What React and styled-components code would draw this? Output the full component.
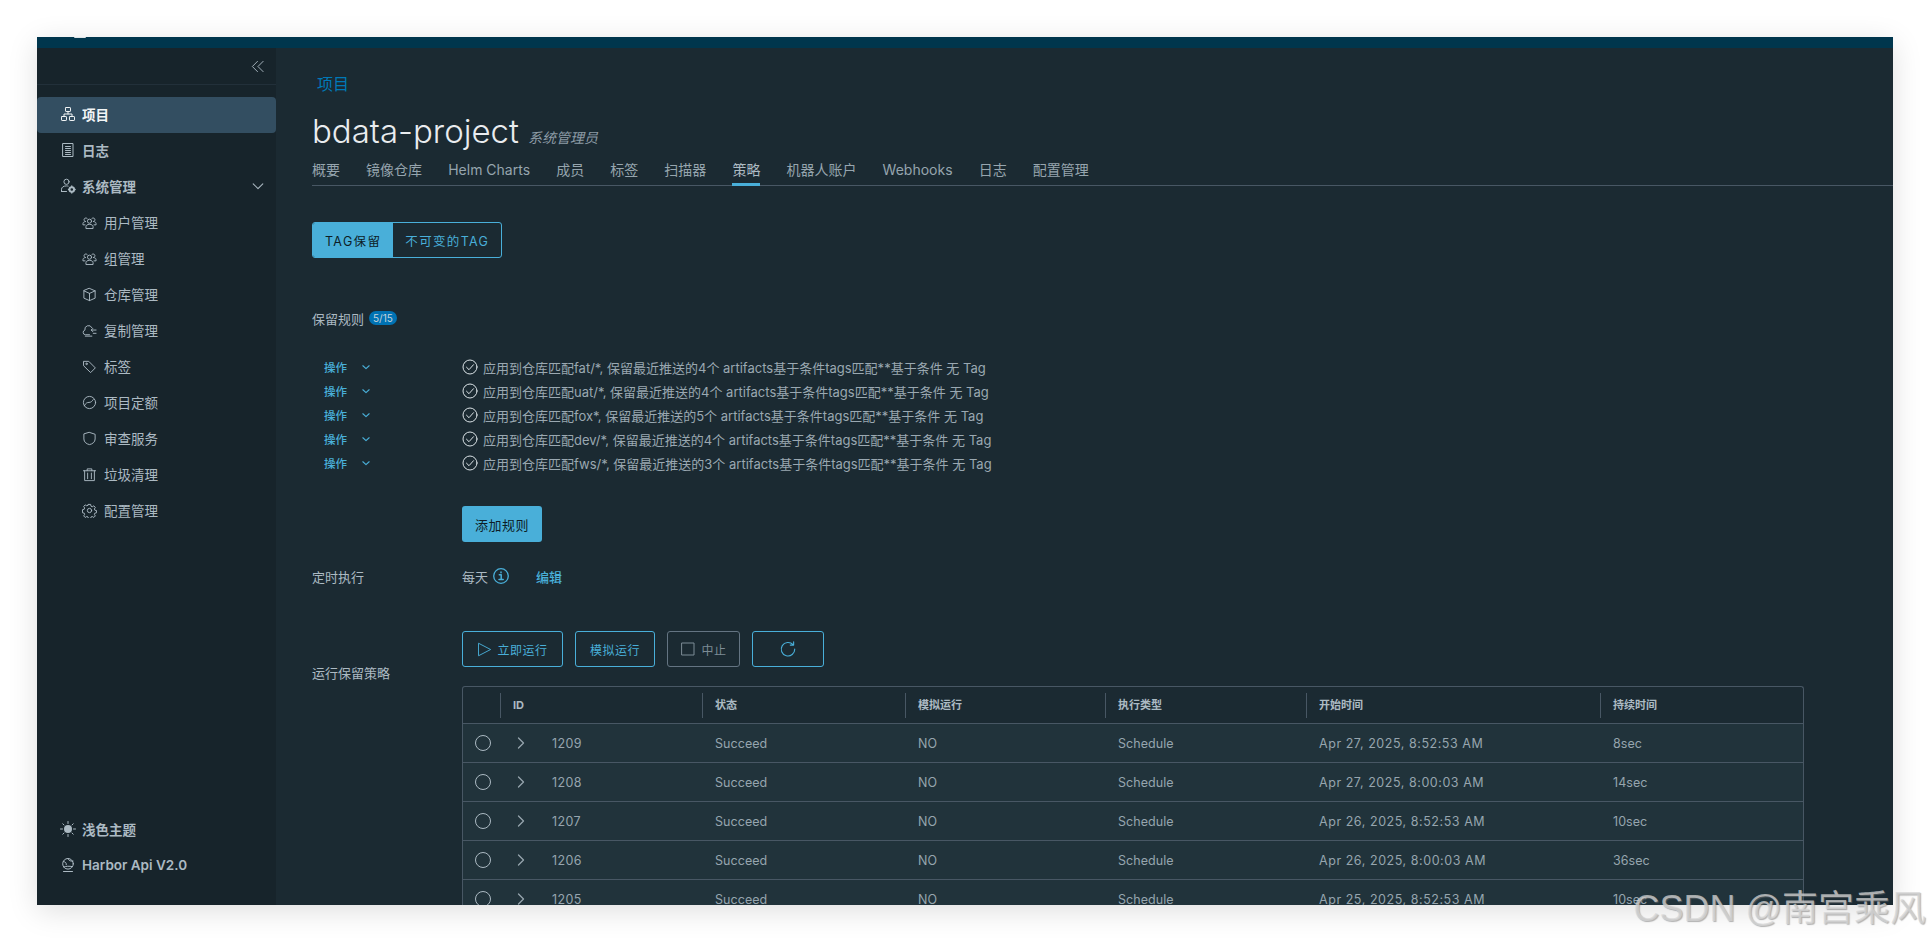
import styled, { createGlobalStyle } from "styled-components";

const FONT = `Inter, "Noto Sans CJK SC", "Noto Sans", sans-serif`;

const GlobalStyle = createGlobalStyle`
  html, body {
    margin: 0;
    height: 941px;
    overflow: hidden;
    background: #fff;
  }
  * { box-sizing: border-box; }
`;

const Page = styled.div`
  position: relative;
  height: 941px;
  padding: 37px 37px 36px;
  font-family: ${FONT};
`;

const Frame = styled.div`
  display: flex;
  flex-direction: column;
  height: 868px;
  background: #1b2a32;
  box-shadow: 0 6px 28px rgba(0, 0, 0, 0.13);
  overflow: hidden;
`;

const TopBar = styled.div`
  position: relative;
  flex: 0 0 11px;
  background: #00364d;
`;

const LogoTip = styled.span`
  position: absolute;
  top: 0;
  left: 37px;
  width: 12px;
  height: 1px;
  background: #dfe5e8;
  border-radius: 0 0 6px 6px;
`;

const Body = styled.div`
  flex: 1;
  display: flex;
  min-height: 0;
`;

const Sidebar = styled.aside`
  flex: 0 0 239px;
  display: flex;
  flex-direction: column;
  background: #17242b;
`;

const CollapseRow = styled.div`
  display: flex;
  justify-content: flex-end;
  align-items: center;
  height: 37px;
  padding-right: 11px;
  margin-bottom: 12px;
  border-bottom: 1px solid #22303a;
  color: #acbac3;
`;

const NavItem = styled.div`
  display: flex;
  align-items: center;
  height: 36px;
  padding-left: ${(p) => (p.$sub ? "45px" : "23px")};
  padding-right: 11px;
  padding-bottom: 2px;
  gap: ${(p) => (p.$sub ? "7px" : "6px")};
  border-radius: 4px;
  font-size: 13.5px;
  font-weight: ${(p) => (p.$active ? 700 : p.$strong ? 600 : 400)};
  color: ${(p) => (p.$active ? "#f2f5f6" : "#acbac3")};
  background: ${(p) => (p.$active ? "#334e61" : "transparent")};
`;

const NavLabel = styled.span`
  flex: 1;
  white-space: nowrap;
`;

const NavBottom = styled.div`
  margin-top: auto;
  padding-bottom: 21px;
`;

const Main = styled.main`
  flex: 1;
  min-width: 0;
  padding: 24px 0 0 36px;
  overflow: hidden;
`;

const Breadcrumb = styled.div`
  height: 24px;
  line-height: 24px;
  padding-left: 5px;
  font-size: 16px;
  color: #0079b8;
`;

const TitleRow = styled.div`
  display: flex;
  align-items: baseline;
  height: 60px;
  padding-top: 14px;
  gap: 9px;
`;

const Title = styled.h1`
  margin: 0;
  font-size: 33px;
  line-height: 42px;
  font-weight: 300;
  color: #e9ecef;
`;

const Role = styled.span`
  font-size: 14px;
  font-style: italic;
  color: #8c9ba5;
`;

const Tabs = styled.nav`
  display: flex;
  gap: 26.1px;
  height: 30px;
  border-bottom: 1px solid #485764;
`;

const Tab = styled.div`
  height: 30px;
  padding-top: 3px;
  line-height: 22px;
  font-size: 14px;
  white-space: nowrap;
  color: ${(p) => (p.$active ? "#acbac3" : "#96a5ae")};
  border-bottom: 3px solid ${(p) => (p.$active ? "#49afd9" : "transparent")};
`;

const Segments = styled.div`
  display: inline-flex;
  height: 36px;
  margin-top: 36px;
  border: 1px solid #49afd9;
  border-radius: 3px;
  overflow: hidden;
`;

const Segment = styled.div`
  display: flex;
  align-items: center;
  padding: 0 12px;
  font-size: 12.5px;
  letter-spacing: 1.35px;
  color: ${(p) => (p.$on ? "#0d1d26" : "#49afd9")};
  background: ${(p) => (p.$on ? "#49afd9" : "transparent")};
`;

const RulesHead = styled.div`
  display: flex;
  align-items: center;
  gap: 5px;
  height: 24px;
  margin-top: 48px;
  font-size: 13px;
  color: #acbac3;
`;

const Badge = styled.span`
  display: inline-block;
  height: 14px;
  padding: 0 4px;
  line-height: 14px;
  border-radius: 7px;
  font-size: 10px;
  color: #c5d3db;
  background: #0072b3;
`;

const RuleList = styled.div`
  margin-top: 25px;
`;

const RuleRow = styled.div`
  display: flex;
  align-items: center;
  height: 24px;
`;

const ActionCell = styled.div`
  flex: 0 0 150px;
  display: flex;
  align-items: center;
  gap: 14px;
  padding-left: 12px;
  font-size: 11.5px;
  font-weight: 500;
  color: #49afd9;
`;

const RuleText = styled.div`
  display: flex;
  align-items: center;
  gap: 5px;
  font-size: 13px;
  color: #9aa8b1;
  white-space: nowrap;
`;

const CheckMark = styled.span`
  display: block;
  color: #dbe3e7;
`;

const Indented = styled.div`
  padding-left: 150px;
`;

const SolidButton = styled.div`
  display: inline-flex;
  align-items: center;
  height: 36px;
  margin-top: 31px;
  padding: 0 13px;
  border-radius: 3px;
  font-size: 13px;
  letter-spacing: 0.5px;
  color: #0d1d26;
  background: #49afd9;
`;

const ScheduleRow = styled.div`
  display: flex;
  align-items: center;
  height: 24px;
  margin-top: 22px;
  font-size: 13px;
  color: #acbac3;
`;

const RowLabel = styled.div`
  flex: 0 0 150px;
  font-size: 13px;
  color: #acbac3;
`;

const EditLink = styled.span`
  margin-left: 27px;
  font-size: 13px;
  font-weight: 500;
  color: #49afd9;
`;

const RunSection = styled.section`
  display: flex;
  margin-top: 43px;
`;

const RunLabel = styled(RowLabel)`
  margin-top: 33px;
  line-height: 18px;
`;

const RunBody = styled.div`
  width: 1342px;
`;

const RunButtons = styled.div`
  display: flex;
  gap: 12px;
  margin-bottom: 19px;
`;

const OutlineButton = styled.div`
  display: flex;
  align-items: center;
  justify-content: center;
  gap: 5px;
  width: ${(p) => p.$w}px;
  height: 36px;
  border: 1px solid ${(p) => (p.$off ? "#647482" : "#49afd9")};
  border-radius: 3px;
  font-size: 12px;
  letter-spacing: 0.5px;
  color: ${(p) => (p.$off ? "#7d8c96" : "#49afd9")};
`;

const Table = styled.div`
  border: 1px solid #485764;
  border-bottom: 0;
  border-radius: 3px 3px 0 0;
`;

const COLUMNS = "37px 202px 203px 200px 201px 294px 1fr";

const HeadRow = styled.div`
  display: grid;
  grid-template-columns: ${COLUMNS};
  align-items: center;
  height: 37px;
  border-bottom: 1px solid #485764;
`;

const HeadCell = styled.div`
  height: 25px;
  line-height: 25px;
  padding-left: 12px;
  border-left: ${(p) => (p.$plain ? "0" : "1px solid #485764")};
  font-size: 11px;
  font-weight: 700;
  color: #acbac3;
`;

const DataRow = styled.div`
  display: grid;
  grid-template-columns: ${COLUMNS};
  align-items: center;
  height: 39px;
  background: #21333b;
  border-bottom: 1px solid #485764;
`;

const DataCell = styled.div`
  display: flex;
  align-items: center;
  padding-left: 13px;
  font-size: 12.5px;
  letter-spacing: ${(p) => (p.$wide ? "0.55px" : "0.05px")};
  white-space: nowrap;
  color: #96a5ae;
`;

const IdCell = styled(DataCell)`
  gap: 23px;
  padding-left: 13px;
  letter-spacing: 0.4px;
`;

const Radio = styled.span`
  display: block;
  width: 16px;
  height: 16px;
  margin-left: 12px;
  border: 1px solid #acbac3;
  border-radius: 50%;
`;

const Watermark = styled.div`
  position: absolute;
  right: 4px;
  bottom: 12px;
  font-family: "Liberation Sans", "Noto Sans CJK SC", sans-serif;
  font-size: 36px;
  line-height: 40px;
  white-space: nowrap;
  color: rgba(215, 215, 215, 0.72);
  text-shadow: 1px 1px 1px rgba(120, 120, 120, 0.55);
`;

const Svg = styled.svg`
  flex: none;
  display: block;
  fill: none;
  stroke: currentColor;
  stroke-width: 1;
  stroke-linecap: round;
  stroke-linejoin: round;
`;

function Icon({ size = 16, children, className }) {
  return (
    <Svg width={size} height={size} viewBox="0 0 16 16" className={className}>
      {children}
    </Svg>
  );
}

const icons = {
  org: (
    <>
      <rect x="5.5" y="1.5" width="5" height="4" rx="0.6" />
      <rect x="1.5" y="10.5" width="5" height="4" rx="0.6" />
      <rect x="9.5" y="10.5" width="5" height="4" rx="0.6" />
      <path d="M8 5.5V8M4 10.5V8h8v2.5" />
    </>
  ),
  log: (
    <>
      <rect x="3" y="1.5" width="10" height="13" />
      <path d="M5.5 4.5h5M5.5 6.5h5M5.5 8.5h5M5.5 10.5h5M5.5 12.5h5" />
    </>
  ),
  admin: (
    <>
      <circle cx="6.5" cy="3.8" r="2.6" />
      <path d="M1.5 13.5v-2.2c0-2 2-3.4 5-3.4.6 0 1.1.1 1.6.2M1.5 13.5h5" />
      <circle cx="11.8" cy="11.5" r="2.3" strokeWidth="1.9" />
      <path d="M11.8 8v1M11.8 14v1M8.5 11.5h1M14.2 11.5h1" strokeWidth="1.3" />
    </>
  ),
  users: (
    <>
      <circle cx="8" cy="6.6" r="2.2" />
      <path d="M4.2 14v-1.6c0-1.4 1.5-2.4 3.8-2.4s3.8 1 3.8 2.4V14z" />
      <path d="M5.6 3.8A1.9 1.9 0 1 0 4 6.9c-1.7.2-3 1-3 2.3v1.3h2.2M10.4 3.8A1.9 1.9 0 1 1 12 6.9c1.7.2 3 1 3 2.3v1.3h-2.2" />
    </>
  ),
  box: (
    <>
      <path d="M8 1.5l6 2.6v7.8l-6 2.6-6-2.6V4.1z" />
      <path d="M2 4.1l6 2.7 6-2.7M8 6.8v7.7" />
    </>
  ),
  cloud: (
    <>
      <path d="M8 12.5H3.5a2.5 2.5 0 0 1-.4-4.9A4 4 0 0 1 10.6 5" />
      <path d="M3.5 14h7M15 7.5h-5M11.5 5.8L9.8 7.5l1.7 1.7M15 11h-3" />
    </>
  ),
  tag: (
    <>
      <path d="M2 2.5h5.2l7 7-5 5-7.2-7z" />
      <circle cx="4.8" cy="5.2" r="0.8" />
    </>
  ),
  quota: (
    <>
      <circle cx="8" cy="8" r="6.5" />
      <path d="M2.5 11.5c1.5-3 3-3.6 5-3.6 2 0 3-.9 4.5-3" />
    </>
  ),
  shield: <path d="M8 1.5l6 2v5c0 3.4-3 5.4-6 6-3-.6-6-2.6-6-6v-5z" />,
  trash: (
    <path d="M1.5 4h13M5.5 4V2h5v2M2.8 4v10.5h10.4V4M6 6.5v6M10 6.5v6" />
  ),
  cog: (
    <>
      <circle cx="8" cy="8" r="2.3" />
      <path d="M6.8 1.5h2.4l.4 1.9 1.3.6 1.7-1 1.6 1.7-1 1.6.5 1.4 1.8.4v2.3l-1.8.4-.5 1.3 1 1.7-1.6 1.6-1.7-1-1.3.5-.4 1.6H6.8l-.4-1.6-1.3-.5-1.7 1-1.6-1.6 1-1.7-.5-1.3-1.8-.4V7.1l1.8-.4.5-1.4-1-1.6 1.6-1.7 1.7 1 1.3-.6z" />
    </>
  ),
  sun: (
    <>
      <circle cx="8" cy="8" r="4" fill="currentColor" stroke="none" />
      <path d="M8 .5v2M8 13.5v2M.5 8h2M13.5 8h2M2.8 2.8l1.2 1.2M12 12l1.2 1.2M2.8 13.2L4 12M12 4l1.2-1.2" />
    </>
  ),
  globe: (
    <>
      <circle cx="8" cy="6.8" r="5.3" />
      <path d="M3.5 4.5c2 .4 3.2 1.6 2.8 3.2M8 1.5c.6 2.2 2.6 3 5 2.6M3.8 10c2-.9 5.4-1 8.6-.4M3.5 14.5h9" />
    </>
  ),
};

const NAV_SUB = [
  ["users", "用户管理"],
  ["users", "组管理"],
  ["box", "仓库管理"],
  ["cloud", "复制管理"],
  ["tag", "标签"],
  ["quota", "项目定额"],
  ["shield", "审查服务"],
  ["trash", "垃圾清理"],
  ["cog", "配置管理"],
];

const TABS = ["概要", "镜像仓库", "Helm Charts", "成员", "标签", "扫描器", "策略", "机器人账户", "Webhooks", "日志", "配置管理"];

const RULES = [
  ["fat/*", 4],
  ["uat/*", 4],
  ["fox*", 5],
  ["dev/*", 4],
  ["fws/*", 3],
];

const RUNS = [
  ["1209", "Apr 27, 2025, 8:52:53 AM", "8sec"],
  ["1208", "Apr 27, 2025, 8:00:03 AM", "14sec"],
  ["1207", "Apr 26, 2025, 8:52:53 AM", "10sec"],
  ["1206", "Apr 26, 2025, 8:00:03 AM", "36sec"],
  ["1205", "Apr 25, 2025, 8:52:53 AM", "10sec"],
];

const InfoSvg = styled(Icon)`
  margin-left: 5px;
  color: #49afd9;
`;

function InfoIcon() {
  return (
    <InfoSvg>
      <circle cx="8" cy="8" r="7.3" strokeWidth="1.3" />
      <path d="M6.3 6.8h1.9v4.7M6 11.5h4.2M8 3.9v.8" strokeWidth="1.5" />
    </InfoSvg>
  );
}

function App() {
  return (
    <Page>
      <GlobalStyle />
      <Frame>
        <TopBar>
          <LogoTip />
        </TopBar>
        <Body>
          <Sidebar>
            <CollapseRow>
              <Icon size={15}>
                <path d="M8 2.5L2.5 8 8 13.5M14 2.5L8.5 8l5.5 5.5" />
              </Icon>
            </CollapseRow>
            <NavItem $active>
              <Icon>{icons.org}</Icon>
              <NavLabel>项目</NavLabel>
            </NavItem>
            <NavItem $strong>
              <Icon>{icons.log}</Icon>
              <NavLabel>日志</NavLabel>
            </NavItem>
            <NavItem $strong>
              <Icon>{icons.admin}</Icon>
              <NavLabel>系统管理</NavLabel>
              <Icon size={14}>
                <path d="M2.5 5.5L8 11l5.5-5.5" strokeWidth="1.2" />
              </Icon>
            </NavItem>
            {NAV_SUB.map(([icon, label]) => (
              <NavItem $sub key={label}>
                <Icon size={15}>{icons[icon]}</Icon>
                <NavLabel>{label}</NavLabel>
              </NavItem>
            ))}
            <NavBottom>
              <NavItem $strong>
                <Icon>{icons.sun}</Icon>
                <NavLabel>浅色主题</NavLabel>
              </NavItem>
              <NavItem $strong>
                <Icon>{icons.globe}</Icon>
                <NavLabel>Harbor Api V2.0</NavLabel>
              </NavItem>
            </NavBottom>
          </Sidebar>

          <Main>
            <Breadcrumb>项目</Breadcrumb>
            <TitleRow>
              <Title>bdata-project</Title>
              <Role>系统管理员</Role>
            </TitleRow>
            <Tabs>
              {TABS.map((t) => (
                <Tab key={t} $active={t === "策略"}>
                  {t}
                </Tab>
              ))}
            </Tabs>

            <Segments>
              <Segment $on>TAG保留</Segment>
              <Segment>不可变的TAG</Segment>
            </Segments>

            <RulesHead>
              保留规则 <Badge>5/15</Badge>
            </RulesHead>

            <RuleList>
              {RULES.map(([repo, count]) => (
                <RuleRow key={repo}>
                  <ActionCell>
                    操作
                    <Icon size={10}>
                      <path d="M3 6l5 4.5L13 6" strokeWidth="1.8" />
                    </Icon>
                  </ActionCell>
                  <RuleText>
                    <CheckMark>
                      <Icon>
                        <circle cx="8" cy="8" r="7" />
                        <path d="M4.5 8.2l2.5 2.5 4.5-5" />
                      </Icon>
                    </CheckMark>
                    {`应用到仓库匹配${repo}, 保留最近推送的${count}个 artifacts基于条件tags匹配**基于条件 无 Tag`}
                  </RuleText>
                </RuleRow>
              ))}
            </RuleList>

            <Indented>
              <SolidButton>添加规则</SolidButton>
            </Indented>

            <ScheduleRow>
              <RowLabel>定时执行</RowLabel>
              每天
              <InfoIcon />
              <EditLink>编辑</EditLink>
            </ScheduleRow>

            <RunSection>
              <RunLabel>运行保留策略</RunLabel>
              <RunBody>
                <RunButtons>
                  <OutlineButton $w={101}>
                    <Icon size={15}>
                      <path d="M2 1.5L14.5 8 2 14.5z" />
                    </Icon>
                    立即运行
                  </OutlineButton>
                  <OutlineButton $w={80}>模拟运行</OutlineButton>
                  <OutlineButton $w={73} $off>
                    <Icon size={16}>
                      <rect x="2" y="2" width="12" height="12" />
                    </Icon>
                    中止
                  </OutlineButton>
                  <OutlineButton $w={72}>
                    <Icon size={18}>
                      <path d="M12.5 4.2A6 6 0 1 0 14 8M13 1.5v3h-3" />
                    </Icon>
                  </OutlineButton>
                </RunButtons>

                <Table>
                  <HeadRow>
                    <HeadCell $plain />
                    <HeadCell>ID</HeadCell>
                    <HeadCell>状态</HeadCell>
                    <HeadCell>模拟运行</HeadCell>
                    <HeadCell>执行类型</HeadCell>
                    <HeadCell>开始时间</HeadCell>
                    <HeadCell>持续时间</HeadCell>
                  </HeadRow>
                  {RUNS.map(([id, start, took]) => (
                    <DataRow key={id}>
                      <Radio />
                      <IdCell>
                        <Icon size={16}>
                          <path d="M5.5 3L10.5 8 5.500 13" strokeWidth="1.300" />
                        </Icon>
                        {id}
                      </IdCell>
                      <DataCell>Succeed</DataCell>
                      <DataCell>NO</DataCell>
                      <DataCell>Schedule</DataCell>
                      <DataCell $wide>{start}</DataCell>
                      <DataCell>{took}</DataCell>
                    </DataRow>
                  ))}
                </Table>
              </RunBody>
            </RunSection>
          </Main>
        </Body>
      </Frame>
      <Watermark>CSDN @南宫乘风</Watermark>
    </Page>
  );
}

export default App;
